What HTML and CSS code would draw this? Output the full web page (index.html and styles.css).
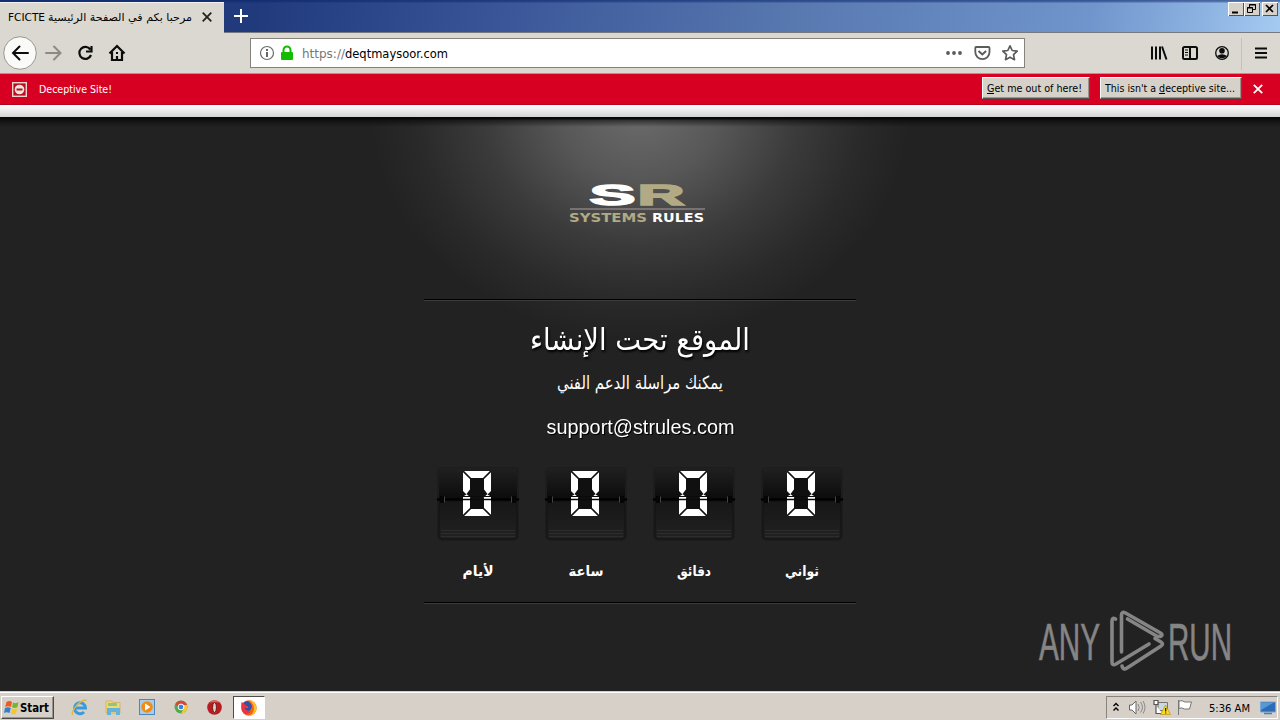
FILE: index.html
```html
<!DOCTYPE html>
<html lang="en">
<head>
<meta charset="utf-8">
<title>FCICTE</title>
<link rel="stylesheet" href="styles.css">
</head>
<body>
<div class="screen">
<header class="tabs">
  <div class="tab">
    <svg width="184" height="18"><text class="ui" x="0" y="12" textLength="37" lengthAdjust="spacingAndGlyphs">FCICTE</text><text class="ui" x="40" y="12" textLength="144" lengthAdjust="spacingAndGlyphs">مرحبا بكم في الصفحة الرئيسية</text></svg>
    <svg class="tabx" width="10" height="10" viewBox="0 0 10 10"><path d="M.7.7l8.6 8.6M9.3.7L.7 9.3" stroke="#222" stroke-width="1.8"/></svg>
  </div>
  <svg class="plus" width="14" height="14"><path d="M7 0v14M0 7h14" stroke="#fff" stroke-width="2"/></svg>
  <div class="winbtns">
    <svg class="wb" width="16" height="14"><path d="M4 9.500h6v2H4z"/></svg>
    <svg class="wb" width="16" height="14"><path d="M5.500 5V2.500h6v5H9M5 3h7M3.500 5.500h5v5h-5zM3 6h6" fill="none" stroke="#000"/></svg>
    <svg class="wb gap" width="16" height="14"><path d="M4 3l7 7M11 3l-7 7" stroke="#000" stroke-width="1.700"/></svg>
  </div>
</header>
<nav class="nav">
  <svg width="130" height="40" viewBox="0 33 130 40" fill="none">
    <circle cx="20" cy="53" r="16.3" fill="#fafaf9" stroke="#999690"/>
    <path d="M28 53H13M19.500 46.500L13 53l6.500 6.500" stroke="#0c0c0d" stroke-width="2" stroke-linecap="round"/>
    <path d="M46 53h14M54 46.500l6.500 6.500-6.500 6.500" stroke="#8c8a85" stroke-width="2" stroke-linecap="round"/>
    <path d="M90.300 49.500A6 6 0 1 0 91 55M91.500 46v5.500H86" stroke="#0c0c0d" stroke-width="2.200"/>
    <path d="M109.500 53.500L117 46l7.500 7.500M112 52v8h10v-8M117 60v-4" stroke="#0c0c0d" stroke-width="2.200"/>
    <path d="M116 52h2v2h-2z" fill="#0c0c0d"/>
  </svg>
  <div class="url">
    <svg width="50" height="28" viewBox="251 39 50 28">
      <circle cx="267" cy="53" r="6.500" fill="none" stroke="#6c6c6c" stroke-width="1.200"/><path d="M266 52h2v5h-2zM266 49h2v2h-2z" fill="#666"/>
      <rect x="281" y="52" width="12" height="8" rx="1" fill="#12bc00"/><path d="M283.500 53v-3a3.500 3.500 0 0 1 7 0v3" fill="none" stroke="#12bc00" stroke-width="2"/>
    </svg>
    <svg width="160" height="28"><text class="ui big" x="1" y="19" textLength="43" lengthAdjust="spacingAndGlyphs" fill="#777">https://</text><text class="ui big" x="44" y="19" textLength="103" lengthAdjust="spacingAndGlyphs">deqtmaysoor.com</text></svg>
    <svg class="acts" width="84" height="28" viewBox="940 39 84 28" fill="none" stroke="#5b5b5b">
      <g fill="#5b5b5b" stroke="none"><circle cx="948" cy="53" r="1.900"/><circle cx="954" cy="53" r="1.900"/><circle cx="960" cy="53" r="1.900"/></g>
      <path d="M976 47h12.500q1 0 1 1v4a7 7 0 0 1-14.200 0v-4q0-1 .7-1z" stroke-width="1.800"/><path d="M978.500 51l3.800 3.500 3.800-3.500" stroke-width="2"/>
      <path d="M1010 45.800l2.200 4.700 5 .6-3.700 3.500 1 5.100-4.500-2.500-4.500 2.500 1-5.100-3.700-3.500 5-.6z" stroke-width="1.700" stroke-linejoin="round"/>
    </svg>
  </div>
  <svg class="tools" width="140" height="40" viewBox="1140 33 140 40" fill="none" stroke="#0c0c0d">
    <path d="M1152 46.500v13M1156 46.500v13M1160 46.500v13M1162 46.500l4.500 13" stroke-width="2"/>
    <rect x="1183" y="47" width="14" height="12" rx="1.500" stroke-width="2"/><path d="M1190 47v12" stroke-width="2"/><path d="M1185 50h3M1185 52.500h3M1185 55h3"/>
    <circle cx="1222" cy="53" r="6.300" stroke-width="1.300"/><circle cx="1222" cy="50.700" r="2.800" fill="#0c0c0d" stroke="none"/><path d="M1217 56q5-3.500 10 0-5 4.500-10 0z" fill="#0c0c0d" stroke="none"/>
    <path d="M1241.500 38v32" stroke="#c4c1bb"/>
    <path d="M1255 48.500h12M1255 53h12M1255 57.500h12" stroke-width="2"/>
  </svg>
</nav>
<div class="warn">
  <svg width="15" height="15"><rect x=".7" y=".7" width="13.600" height="13.600" fill="#b90f24" stroke="#ecd5cc" stroke-width="1.400"/><circle cx="7.500" cy="7.500" r="4.800" fill="#f5e6dc"/><path d="M4.500 7.500h6" stroke="#b90f24" stroke-width="2"/></svg>
  <svg class="wtext" width="76" height="20"><text class="ui" x="0" y="14" textLength="73" lengthAdjust="spacingAndGlyphs" fill="#fff">Deceptive Site!</text></svg>
  <button class="btn b1"><svg width="98" height="18"><text class="ui" x="0" y="13" textLength="95" lengthAdjust="spacingAndGlyphs">Get me out of here!</text><path d="M0 14.500h7" stroke="#000"/></svg></button>
  <button class="btn b2"><svg width="133" height="18"><text class="ui" x="0" y="13" textLength="130" lengthAdjust="spacingAndGlyphs">This isn't a deceptive site...</text><path d="M54 14.500h6" stroke="#000"/></svg></button>
  <svg width="10" height="10"><path d="M.8.8l8.400 8.400M9.200.8L.8 9.200" stroke="#fff" stroke-width="1.800"/></svg>
</div>
<main class="page">
  <div class="strip"></div>
  <div class="box">
    <svg class="logo" width="140" height="42" viewBox="569 182 140 42">
      <text class="brand" x="589.500" y="204.500" font-size="29" textLength="46" lengthAdjust="spacingAndGlyphs" fill="#fff" stroke="#fff">S</text>
      <text class="brand" x="637.500" y="204.500" font-size="29" textLength="47" lengthAdjust="spacingAndGlyphs" fill="#b2aa84" stroke="#b2aa84">R</text>
      <path d="M570 209h135" stroke="#8b8082" stroke-width="1.500"/>
      <text class="brand small" x="569" y="222" font-size="11.500" textLength="78" lengthAdjust="spacingAndGlyphs" fill="#b2aa84">SYSTEMS</text>
      <text class="brand small" x="652" y="222" font-size="11.500" textLength="52" lengthAdjust="spacingAndGlyphs" fill="#fff">RULES</text>
    </svg>
    <div class="rule"></div>
    <svg class="copy" width="432" height="150" viewBox="424 310 432 150">
      <text class="ar shadow" x="640" y="350" text-anchor="middle" font-size="30" textLength="220" lengthAdjust="spacingAndGlyphs">الموقع تحت الإنشاء</text>
      <text class="ar" x="640" y="389" text-anchor="middle" font-size="18" textLength="166" lengthAdjust="spacingAndGlyphs">يمكنك مراسلة الدعم الفني</text>
      <text class="mail" x="546.500" y="434" font-size="20" textLength="188" lengthAdjust="spacingAndGlyphs">support@strules.com</text>
    </svg>
    <div class="clock" id="clock"></div>
    <div class="rule"></div>
  </div>
  <svg class="anyrun" width="198" height="64" viewBox="1036 609 198 64">
    <g fill="none" stroke="#858585" stroke-width="3.600" stroke-linejoin="round" stroke-linecap="round">
      <path d="M1115.500 619q-3.500-2-3.500 2v41q0 4 4 2l33-20"/>
      <path d="M1121.500 653v-38q0-4 4-2l35 20q3 3 0 4l-34-11"  stroke="none"/>
      <path d="M1121.500 652v-37q0-4 4-2l35 20q3 2 0 3.500h-3l-30-17.500"/>
      <path d="M1122 666q1 4.500 5 2l34-22q3-2 0-4l-6-3.500"/>
    </g>
    <text class="any" x="1039" y="659.500" textLength="61" lengthAdjust="spacingAndGlyphs">ANY</text>
    <text class="any" x="1168" y="659.500" textLength="64" lengthAdjust="spacingAndGlyphs">RUN</text>
  </svg>
</main>
<footer class="taskbar">
  <div class="start">
    <svg width="16" height="16"><path d="M2.500 2q3-2 5.500 0L7 7Q4 5.500 1.200 7z" fill="#ef5a24"/><path d="M9 2.500q3 1.500 5.500-.5L13.500 7Q11 8.800 8 7.300z" fill="#75b62c"/><path d="M1 8q3-1.500 5.800 0L5.500 13q-3-1.500-5.500 0z" fill="#2c83cc"/><path d="M8 8.500q3 1.500 5.500-.5L12 13.500q-2.500 1.500-5.200 0z" fill="#f7c526"/></svg>
    <svg width="31" height="16"><text class="ui bold" x="0" y="12" textLength="29" lengthAdjust="spacingAndGlyphs">Start</text></svg>
  </div>
  <svg class="apps" width="156" height="26" viewBox="66 694 156 26" fill="none">
    <path d="M75 708h10.500a5.500 5.500 0 1 0-1.500 4" stroke="#3a9bdc" stroke-width="2.900"/><path d="M73 714.500c-3 0 4-14 13.500-14.500" stroke="#e2b63a" stroke-width="1.300"/>
    <path d="M106 701h6l1 1.500h7V713h-14z" fill="#f3d777" stroke="#c6a648" stroke-width=".6"/><path d="M108 703h9v3h-9z" fill="#8cc878"/><path d="M107 708h13v7h-4v-3h-5v3h-4z" fill="#64b3df"/>
    <rect x="139.500" y="699.500" width="15" height="15" fill="#a8cdeb" stroke="#4a87bd"/><circle cx="147" cy="707" r="5.800" fill="#f28a16"/><path d="M145 703.500l5.500 3.500-5.500 3.500z" fill="#fff"/>
    <circle cx="181" cy="707" r="6.500" fill="#50aa48"/><path d="M175.400 703.700A6.500 6.500 0 0 1 187 705h-6l-2.500 3z" fill="#db4437"/><path d="M183 705h4.200a6.500 6.500 0 0 1-6.200 8.500l2.500-4.500z" fill="#f7c834"/><circle cx="181" cy="707" r="2.900" fill="#3c7fe0" stroke="#fff"/>
    <circle cx="214.500" cy="707.500" r="7.300" fill="#b81c20"/><path d="M209 703a7 7 0 0 1 11 0q-5-2-11 0z" fill="#df6862"/><ellipse cx="214.500" cy="707.500" rx="2" ry="5" fill="#d6cfc8" stroke="#761012"/>
  </svg>
  <div class="ff"><svg width="18" height="18"><circle cx="9" cy="9" r="7.700" fill="#f5631e"/><path d="M9 1.300a7.700 7.700 0 0 1 7 10.500A7.500 7.500 0 0 1 9 16.700q5-2 5-7t-5-8.400z" fill="#ffc42a"/><path d="M3 4q2-2 5-2 3 2 4 5-1 5-4 5-4-.5-4-4 3 2 4.500 0Q5 7 3 4z" fill="#3451a4"/><path d="M1.500 3Q4 4 5 6l3 1.500Q6 10 4 8q2 5 7 4-2 4-6 3-5-3-3.500-12z" fill="#ed3340"/></svg></div>
  <div class="tray">
    <svg width="86" height="22" viewBox="1107 697 86 22" fill="none">
      <path d="M1113.500 706l2.500-2.500 2.500 2.500M1113.500 710.500l2.500-2.500 2.500 2.500" stroke="#000" stroke-width="1.400"/>
      <path d="M1129.500 705h2.500l4-4v13l-4-4h-2.500z" fill="#fff" stroke="#666"/><path d="M1138 704q2.500 3.500 0 7M1140.500 702q4 5.500 0 10.500M1143 701q4 6.500 0 12.500" stroke="#888"/>
      <path d="M1158 702.500h9.500v8H1158z" fill="#c8d9df" stroke="#777"/><path d="M1154 700.500h4v4h-4zM1156 705v8.500h6" fill="#fff" stroke="#555" stroke-width="1.200"/><path d="M1165.500 705l5 9.500h-10z" fill="#ffd91b" stroke="#ad8c00" stroke-width=".6"/><path d="M1165 708h1.300v3.500h-1.300zM1165 712.500h1.300v1h-1.300z" fill="#222"/>
      <path d="M1178.500 700v15M1179 701q3-1 6 1h6.500l-2 7h-5q-3-2-5.500-.5z" fill="#fff" stroke="#777"/>
    </svg>
    <svg class="time" width="44" height="20"><text class="ui" x="0" y="13.500" textLength="41" lengthAdjust="spacingAndGlyphs">5:36 AM</text></svg>
    <svg class="desk" width="16" height="15"><path d="M.5 1h15v10H.5z" fill="#2c6bb6" stroke="#78a7d5"/><path d="M1 2h12L1 9z" fill="#5798d7"/><path d="M4 12.500h8" stroke="#537ca8" stroke-width="1.500"/></svg>
  </div>
</footer>
</div>
<script src="clock.js"></script>
</body>
</html>
```
FILE: styles.css
```css
* { box-sizing: border-box; }
body { margin: 0; background: #222; font-family: "DejaVu Sans Condensed", "DejaVu Sans", sans-serif; }
svg { display: block; flex: none; }
.screen { width: 1280px; height: 720px; overflow: hidden; display: flex; flex-direction: column; }
.ui { font: 10.5px "DejaVu Sans Condensed", "DejaVu Sans", sans-serif; }
.ui.big { font-size: 12.500px; }
.ui.bold { font-weight: bold; font-size: 11.500px; }
.tabs { height: 33px; flex: none; display: flex; background: linear-gradient(#0a246a99, #0a246a66 2px, transparent 3px), linear-gradient(100deg, #203a7c 20%, #3a5698 39%, #5878b0 62%, #6f95cc 85%, #8db3e2 94%, #a6cbf2); border-bottom: 1px solid #77797c; }
.tab { width: 224px; height: 31px; margin-top: 2px; background: #dbd8d1; border-top: 1px solid #f2f0eb; display: flex; padding: 6px 0 0 8px; }
.tab + .plus { margin: 9px 0 0 10px; }
.tabx { margin: 3px 0 0 10px; }
.winbtns { margin: 2px 2px 0 auto; display: flex; }
.wb { background: #d6d2ca; box-shadow: inset 1px 1px #fff, inset -1px -1px #55534f; }
.wb.gap { margin-left: 2px; }
.nav { height: 41px; flex: none; display: flex; background: #dbd8d1; border-bottom: 1px solid #a19d96; }
.url { margin: 5px 0 0 120px; width: 775px; height: 30px; background: #fff; border: 1px solid #85827c; display: flex; }
.acts { margin-left: auto; }
.tools { margin-left: auto; }
.warn { height: 31px; flex: none; background: #d70022; border-bottom: 1px solid #b7001d; display: flex; padding: 0 17px 0 12px; align-items: center; }
.wtext { margin-left: 12px; }
.btn { height: 22px; padding: 0 0 0 4px; margin: 0 0 3px; background: #d6d2ca; border: 1px solid; border-color: #fff #55534f #55534f #fff; box-shadow: inset -1px -1px #99958e; }
.b1 { width: 108px; margin-left: auto; }
.b2 { width: 142px; margin-left: 10px; margin-right: 11px; }
.page { flex: 1; min-height: 0; position: relative; background: linear-gradient(#080808 14px, #0008 15px, transparent 22px), radial-gradient(ellipse 270px 230px at 640px 5px, #6c6c6c, #575757 30%, #3b3b3b 58%, #2a2a2a 82%, #222), #222; }
.strip { height: 12px; background: linear-gradient(#fff, #d2d2d2); }
.box { width: 432px; margin: 0 auto; padding-top: 65px; }
.logo { margin: 0 0 75px 145px; }
.brand { font-family: "Liberation Sans", sans-serif; font-weight: bold; stroke-width: 1.500; }
.brand.small { font-family: "DejaVu Sans", sans-serif; }
.rule { height: 2px; border-top: 1px solid #000; background: #3b3b3b; }
.copy { margin-top: 9px; }
.copy text { fill: #fff; }
.ar { font-family: "DejaVu Sans", sans-serif; }
.shadow { filter: drop-shadow(1px 2px 1px #000); }
.mail { font-family: "Liberation Sans", Arial, sans-serif; filter: drop-shadow(1px 1px 0 #000); }
.clock { display: flex; height: 142px; padding-top: 6px; }
.unit { width: 108px; display: flex; flex-direction: column; align-items: center; }
.unit .name { margin-top: 19px; }
.unit .name text { fill: #fff; font-family: "DejaVu Sans", sans-serif; font-size: 14px; font-weight: bold; }
.digit { fill: #fff; stroke: #fff; stroke-width: 16; font: bold 56px "Liberation Sans", sans-serif; }
.anyrun { position: absolute; right: 46px; bottom: 18px; }
.any { font: 51px "Liberation Sans", sans-serif; fill: #858585; stroke: #858585; stroke-width: .6; }
.taskbar { height: 29px; flex: none; background: #d6d0c8; border-top: 1px solid #d6d0c8; box-shadow: inset 0 1px #fff; display: flex; position: relative; }
.start { width: 53px; height: 23px; margin: 4px 0 0 1px; display: flex; align-items: center; padding-left: 2px; background: #d6d0c8; border: 1px solid; border-color: #fff #4e4c48 #4e4c48 #fff; box-shadow: inset -1px -1px #99958e; }
.apps { margin: 2px 0 0 12px; }
.ff { margin: 4px 0 0 11px; width: 32px; height: 23px; background: #fff; border: 1px solid; border-color: #4e4c48 #fff #fff #4e4c48; padding: 2px 0 0 6px; }
.tray { margin: 4px 2px 0 auto; width: 172px; height: 23px; border: 1px solid; border-color: #88847d #fff #fff #88847d; display: flex; }
.time { margin: 1px 0 0 16px; }
.desk { margin: 4px 0 0 7px; }
```
FILE: clock.js
```js
const units = [["لأيام", 31], ["ساعة", 35], ["دقائق", 34], ["ثواني", 34]];
document.getElementById("clock").innerHTML = units.map(([name, width], i) => `
<div class="unit">
  <svg width="84" height="76" viewBox="0 0 84 76">
    <defs>
      <linearGradient id="top${i}" x2="0" y2="1"><stop stop-color="#202020"/><stop offset="1" stop-color="#0b0b0b"/></linearGradient>
      <linearGradient id="low${i}" x2="0" y2="1"><stop stop-color="#171717"/><stop offset="1" stop-color="#212121"/></linearGradient>
    </defs>
    <rect x="1" y="1" width="82" height="74" rx="5" fill="#1d1d1d"/>
    <path d="M3 5q0-3 3-3h72q3 0 3 3v29H3z" fill="url(#top${i})"/>
    <path d="M3 35h78v34q0 4-4 4H7q-4 0-4-4z" fill="url(#low${i})" stroke="#131313"/>
    <path d="M5 64.500h74M5 67.500h74M5 70.500h74" stroke="#2d2d2d"/>
    <path d="M1 33.500h82" stroke="#000" stroke-width="2.500"/>
    <svg x="27" y="5" width="28" height="45" viewBox="0 0 28 45">
      <text class="digit" x="-4" y="42" textLength="36" lengthAdjust="spacingAndGlyphs">0</text>
      <path d="M7 7h14v11l-3 4.500 3 4.500v11H7V27l3-4.500L7 18z" fill="#101010"/>
      <path d="M0 0l8 8M28 0l-8 8M0 45l8-8M28 45l-8-8" stroke="#101010" stroke-width="1.600"/>
      <path d="M-1 19l4.500 4.500L-1 26zM29 19l-4.500 4.500L29 26zM8 17l-4.500 6L8 27h4V17zM20 17l4.500 6L20 27h-4V17z" fill="#101010"/>
      <path d="M0 25.500h28" stroke="#0a0a0a"/><path d="M0 28.500h28" stroke="#0a0a0a" stroke-width="1.500"/>
    </svg>
    <path d="M6 30v7M78 30v7" stroke="#050505" stroke-width="4"/>
    <path d="M8.500 30.500v6M75.500 30.500v6" stroke="#444"/>
  </svg>
  <svg class="name" width="44" height="26"><text x="22" y="15" text-anchor="middle" textLength="${width}" lengthAdjust="spacingAndGlyphs">${name}</text></svg>
</div>`).join("");
```
